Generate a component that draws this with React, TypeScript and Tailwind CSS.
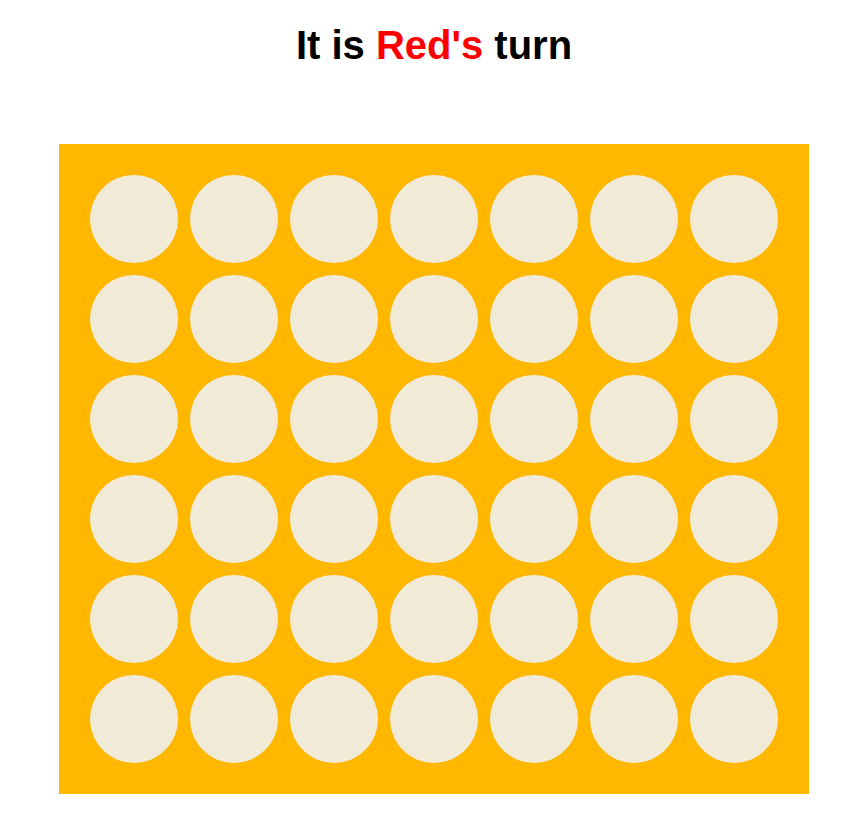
export default function App() {
  const rows = Array.from({ length: 6 });
  const cols = Array.from({ length: 7 });
  return (
    <div className="min-h-screen bg-white flex flex-col items-center pt-[22px] pl-[2px]" style={{ fontFamily: '"Liberation Sans", Arial, sans-serif' }}>
      <h1 className="text-[40px] leading-[46px] font-bold text-black">
        It is <span className="text-[#ff0000]">Red's</span> turn
      </h1>
      <div className="mt-[76px] bg-[#ffb700] p-[25px] grid grid-cols-7 w-[750px]">
        {rows.map((_, r) =>
          cols.map((_, c) => (
            <div key={`${r}-${c}`} className="w-[100px] h-[100px] flex items-center justify-center">
              <div className="w-[88px] h-[88px] rounded-full bg-[#f0ead6]" />
            </div>
          ))
        )}
      </div>
    </div>
  );
}
